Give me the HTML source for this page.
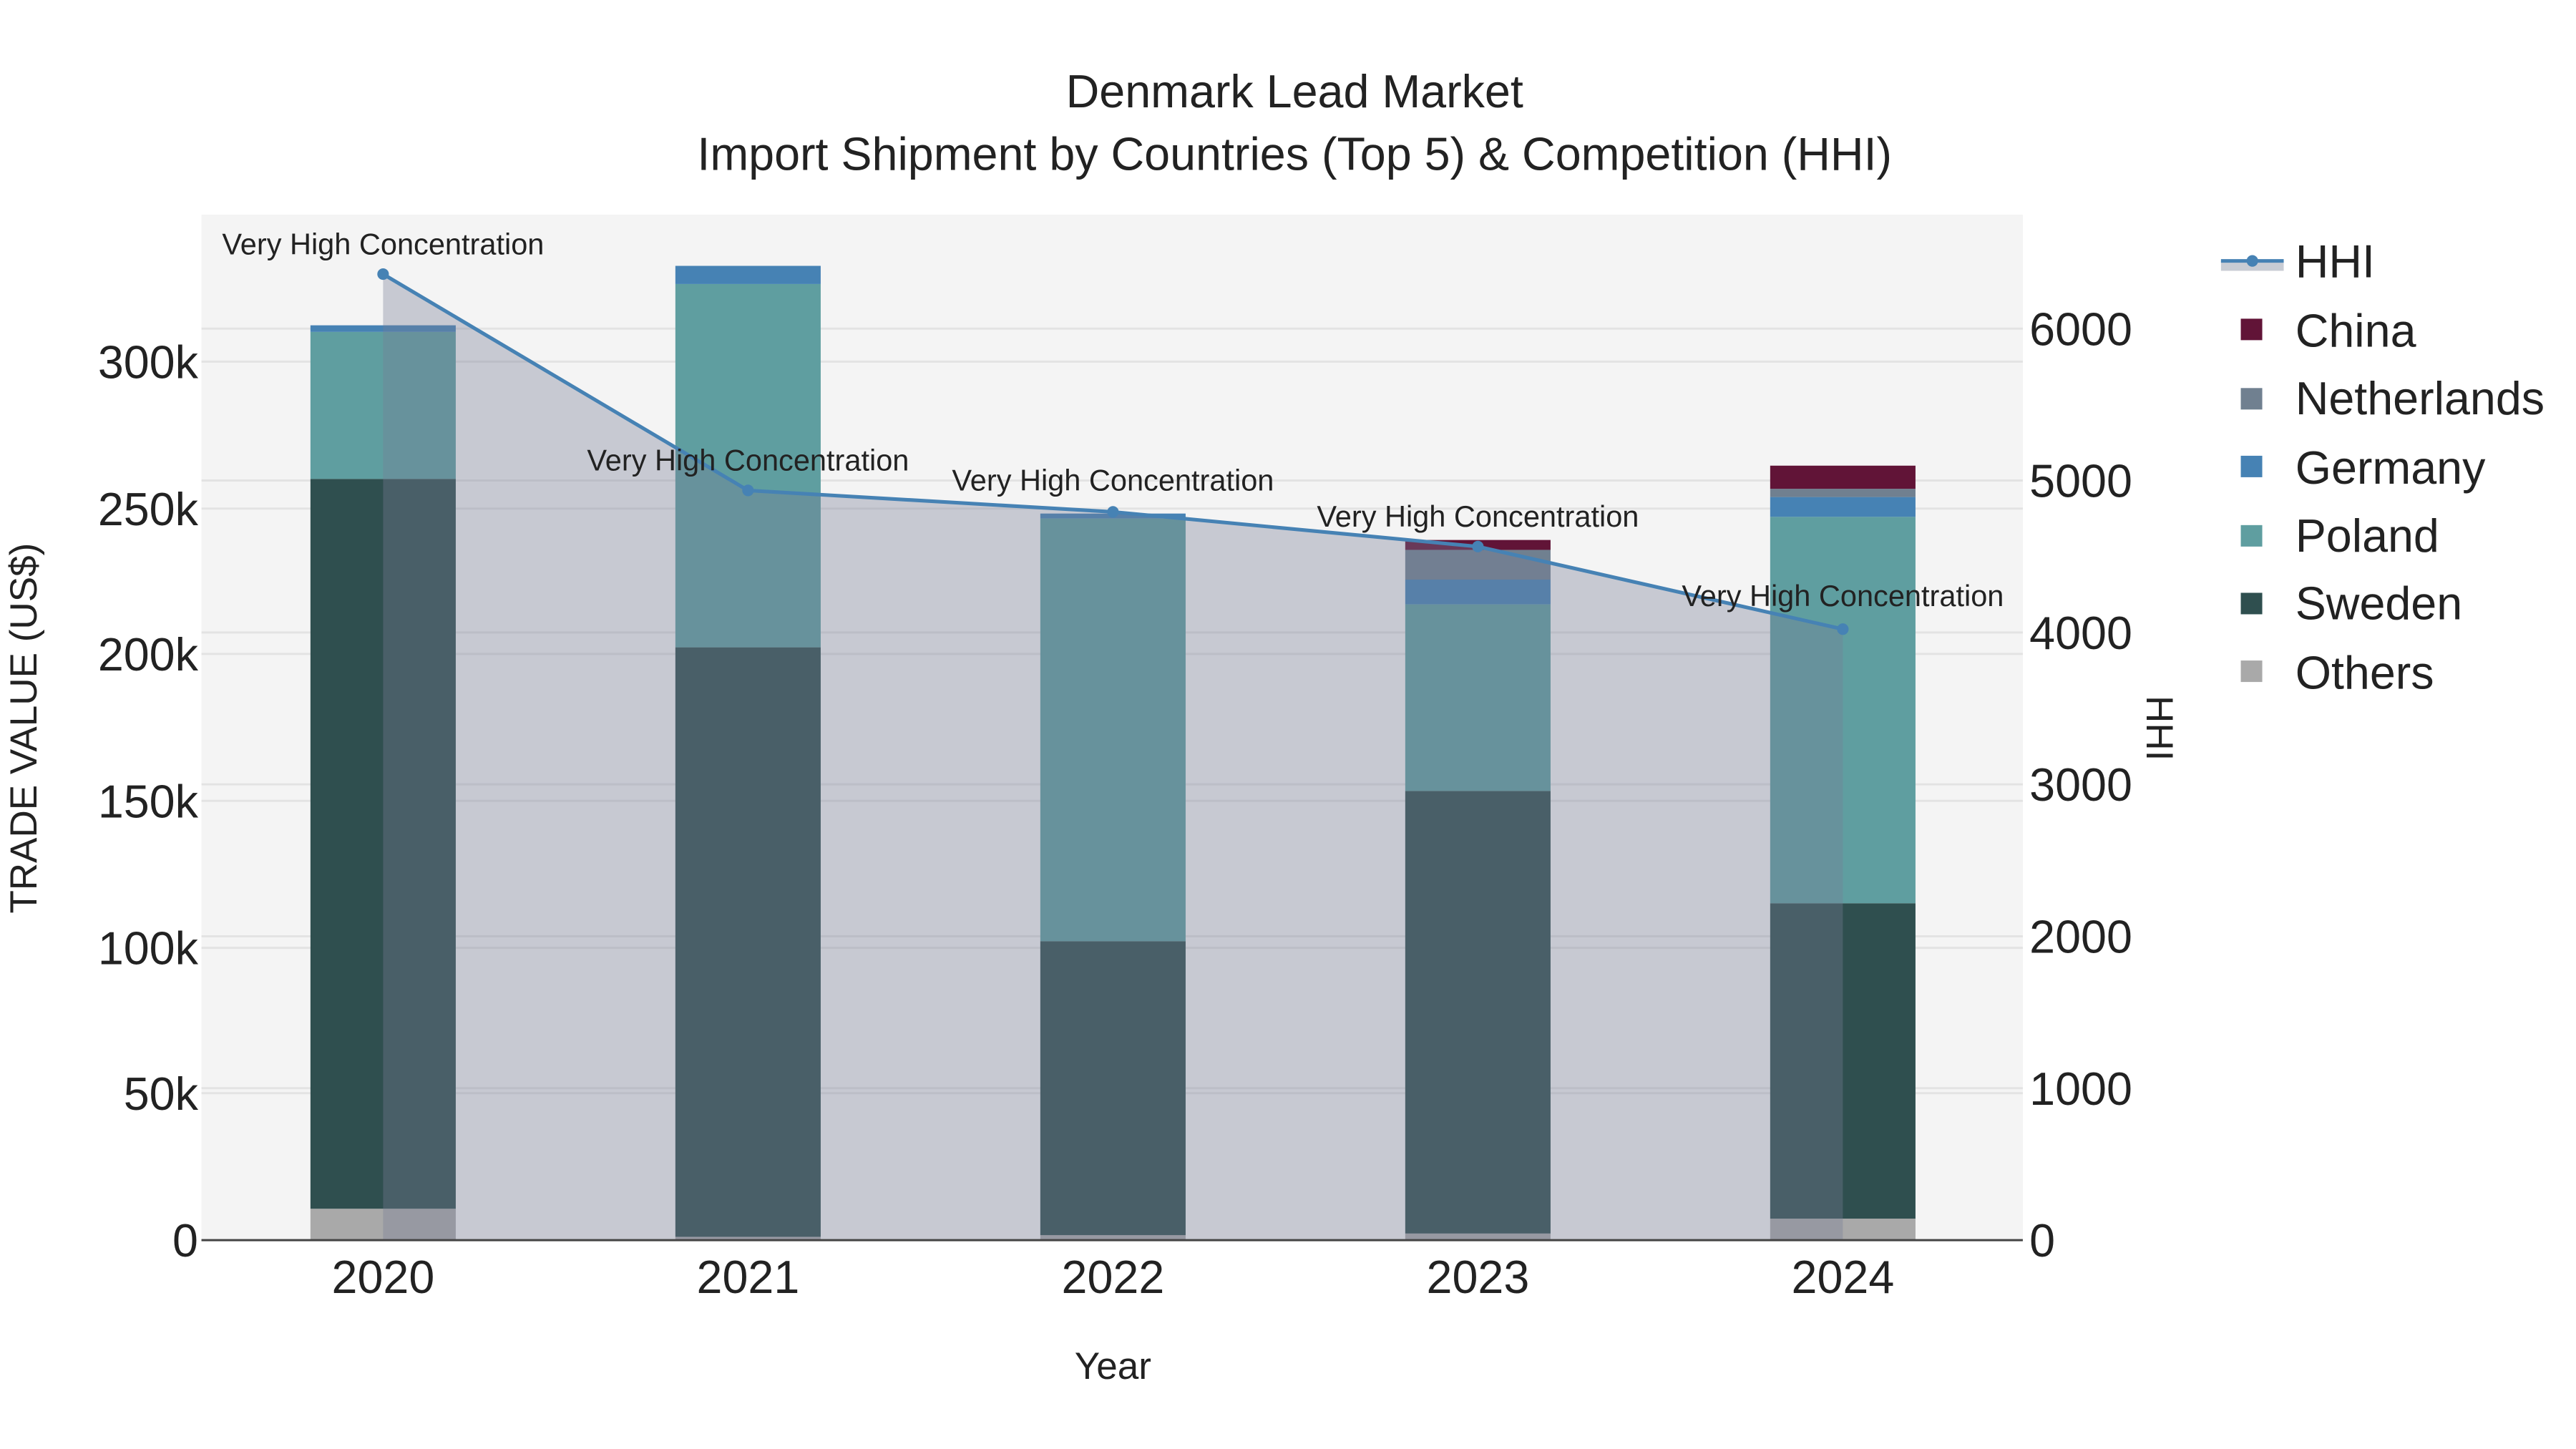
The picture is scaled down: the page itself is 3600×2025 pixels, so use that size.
<!DOCTYPE html>
<html><head><meta charset="utf-8"><style>html,body{margin:0;padding:0;background:#fff}svg{display:block}text{font-family:"Liberation Sans",sans-serif;fill:#222}</style></head>
<body>
<svg width="3600" height="2025" viewBox="0 0 1560 877.5" xmlns="http://www.w3.org/2000/svg">
<rect x="0" y="0" width="1560" height="877.5" fill="#fff"/>
<rect x="122" y="130" width="1103" height="621" fill="#f4f4f4"/>
<g stroke="#e3e3e3" stroke-width="1.3">
<line x1="122" x2="1225" y1="662" y2="662"/><line x1="122" x2="1225" y1="574" y2="574"/><line x1="122" x2="1225" y1="485" y2="485"/><line x1="122" x2="1225" y1="396" y2="396"/><line x1="122" x2="1225" y1="308" y2="308"/><line x1="122" x2="1225" y1="219" y2="219"/>
<line x1="122" x2="1225" y1="659" y2="659"/><line x1="122" x2="1225" y1="567" y2="567"/><line x1="122" x2="1225" y1="475" y2="475"/><line x1="122" x2="1225" y1="383" y2="383"/><line x1="122" x2="1225" y1="291" y2="291"/><line x1="122" x2="1225" y1="199" y2="199"/>
</g>
<g>
<rect x="188" y="732" width="88" height="19" fill="#a9a9a9"/><rect x="188" y="290" width="88" height="442" fill="#2f4f4f"/><rect x="188" y="201" width="88" height="89" fill="#5f9ea0"/><rect x="188" y="197" width="88" height="4" fill="#4682b4"/>
<rect x="409" y="749" width="88" height="2" fill="#a9a9a9"/><rect x="409" y="392" width="88" height="357" fill="#2f4f4f"/><rect x="409" y="172" width="88" height="220" fill="#5f9ea0"/><rect x="409" y="161" width="88" height="11" fill="#4682b4"/>
<rect x="630" y="748" width="88" height="3" fill="#a9a9a9"/><rect x="630" y="570" width="88" height="178" fill="#2f4f4f"/><rect x="630" y="314" width="88" height="256" fill="#5f9ea0"/><rect x="630" y="311" width="88" height="3" fill="#4682b4"/>
<rect x="851" y="747" width="88" height="4" fill="#a9a9a9"/><rect x="851" y="479" width="88" height="268" fill="#2f4f4f"/><rect x="851" y="366" width="88" height="113" fill="#5f9ea0"/><rect x="851" y="351" width="88" height="15" fill="#4682b4"/><rect x="851" y="333" width="88" height="18" fill="#708090"/><rect x="851" y="327" width="88" height="6" fill="#611437"/>
<rect x="1072" y="738" width="88" height="13" fill="#a9a9a9"/><rect x="1072" y="547" width="88" height="191" fill="#2f4f4f"/><rect x="1072" y="313" width="88" height="234" fill="#5f9ea0"/><rect x="1072" y="301" width="88" height="12" fill="#4682b4"/><rect x="1072" y="296" width="88" height="5" fill="#708090"/><rect x="1072" y="282" width="88" height="14" fill="#611437"/>
</g>
<polygon points="232,751 232,166 453,297 674,310 895,331 1116,381 1116,751" fill="rgba(119,126,150,0.36)"/>
<polyline points="232,166 453,297 674,310 895,331 1116,381" fill="none" stroke="#4682b4" stroke-width="2.2"/>
<g fill="#4682b4"><circle cx="232" cy="166" r="3.5"/><circle cx="453" cy="297" r="3.5"/><circle cx="674" cy="310" r="3.5"/><circle cx="895" cy="331" r="3.5"/><circle cx="1116" cy="381" r="3.5"/></g>
<line x1="122" x2="1225" y1="751" y2="751" stroke="#444" stroke-width="1.3"/>
<g font-size="18" text-anchor="middle">
<text x="232" y="154">Very High Concentration</text><text x="453" y="285">Very High Concentration</text><text x="674" y="297">Very High Concentration</text><text x="895" y="319">Very High Concentration</text><text x="1116" y="367">Very High Concentration</text>
</g>
<g font-size="28" text-anchor="middle">
<text x="784" y="65">Denmark Lead Market</text>
<text x="784" y="103">Import Shipment by Countries (Top 5) &amp; Competition (HHI)</text>
<text x="232" y="783">2020</text><text x="453" y="783">2021</text><text x="674" y="783">2022</text><text x="895" y="783">2023</text><text x="1116" y="783">2024</text>
<text x="674" y="835" font-size="23">Year</text>
</g>
<g font-size="28" text-anchor="end">
<text x="120" y="761">0</text><text x="120" y="672">50k</text><text x="120" y="584">100k</text><text x="120" y="495">150k</text><text x="120" y="406">200k</text><text x="120" y="318">250k</text><text x="120" y="229">300k</text>
</g>
<g font-size="28">
<text x="1229" y="761">0</text><text x="1229" y="669">1000</text><text x="1229" y="577">2000</text><text x="1229" y="485">3000</text><text x="1229" y="393">4000</text><text x="1229" y="301">5000</text><text x="1229" y="209">6000</text>
</g>
<text transform="translate(22,441) rotate(-90)" font-size="23" text-anchor="middle">TRADE VALUE (US$)</text>
<text transform="translate(1300,441) rotate(90)" font-size="23" text-anchor="middle">HHI</text>
<rect x="1345" y="158" width="38" height="6" fill="#c8ccd4"/>
<line x1="1345" x2="1383" y1="158" y2="158" stroke="#4682b4" stroke-width="2.2"/><circle cx="1364" cy="158" r="3.5" fill="#4682b4"/>
<rect x="1357" y="193" width="13" height="13" fill="#611437"/>
<rect x="1357" y="235" width="13" height="13" fill="#708090"/>
<rect x="1357" y="276" width="13" height="13" fill="#4682b4"/>
<rect x="1357" y="318" width="13" height="13" fill="#5f9ea0"/>
<rect x="1357" y="359" width="13" height="13" fill="#2f4f4f"/>
<rect x="1357" y="400" width="13" height="13" fill="#a9a9a9"/>
<g font-size="28">
<text x="1390" y="168">HHI</text><text x="1390" y="210">China</text><text x="1390" y="251">Netherlands</text><text x="1390" y="293">Germany</text><text x="1390" y="334">Poland</text><text x="1390" y="375">Sweden</text><text x="1390" y="417">Others</text>
</g>
</svg>
</body></html>
